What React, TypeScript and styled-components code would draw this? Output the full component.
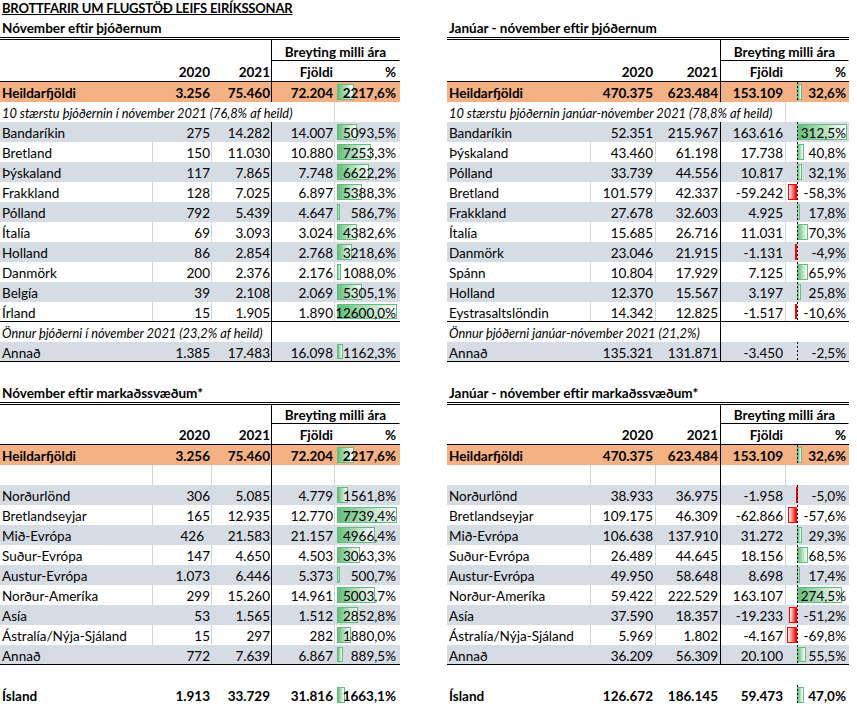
import React from 'react';
import styled, { createGlobalStyle } from 'styled-components';

type Line = 'none' | 'grid' | 'black';

interface RowData {
  label: string;
  a: string;
  b: string;
  diff: string;
  pct: string;
  bar: number;
  padA?: number;
}

interface SectionData {
  heading: string;
  headH: number;
  headLH: number;
  total: RowData;
  intro?: string;
  rows: RowData[];
  note?: string;
  other?: RowData;
  footer?: RowData;
}

interface TableSpec {
  cols: number[];
  pads: number[];
  barStart: number;
  axis: number | null;
}

const GRID = '#d4d4d4';
const GRAY = '#d6dce4';
const ORANGE = '#f4b183';

const GlobalStyle = createGlobalStyle`
  html, body { margin: 0; padding: 0; background: #ffffff; }
  body {
    font-family: Lato, "Noto Sans", sans-serif;
    font-size: 13.5px;
    color: #000000;
  }
`;

const Page = styled.div`
  display: flex;
  gap: 47px;
  width: 857px;
  height: 712px;
  overflow: hidden;
`;

const Column = styled.div<{ $w: number }>`
  display: flex;
  flex-direction: column;
  width: ${(p) => p.$w}px;
  flex: none;
`;

const Title = styled.div`
  height: 17px;
  line-height: 16px;
  padding-left: 2px;
  font-size: 13px;
  letter-spacing: -0.2px;
  font-weight: 700;
  text-decoration: underline;
  white-space: nowrap;
`;

const Gap = styled.div`
  height: 20px;
`;

const Heading = styled.div`
  height: 20px;
  line-height: 22px;
  padding-left: 2px;
  font-weight: 700;
  white-space: nowrap;
  border-bottom: 3px double #000000;
`;

const Row = styled.div<{
  $cols: string;
  $bg?: string;
  $h?: number;
  $lh?: number;
  $rule?: boolean;
  $bold?: boolean;
  $italic?: boolean;
}>`
  display: grid;
  grid-template-columns: ${(p) => p.$cols};
  grid-template-rows: minmax(0, 1fr);
  box-sizing: border-box;
  height: ${(p) => p.$h ?? 20}px;
  line-height: ${(p) => p.$lh ?? 22}px;
  background: ${(p) => p.$bg ?? 'transparent'};
  border-bottom: ${(p) => (p.$rule ? '1px solid #000000' : 'none')};
  font-weight: ${(p) => (p.$bold ? 700 : 400)};
  font-style: ${(p) => (p.$italic ? 'italic' : 'normal')};
  font-size: ${(p) => (p.$italic ? '12.8px' : 'inherit')};
  white-space: nowrap;
`;

const Cell = styled.div<{
  $line?: Line;
  $align?: 'left' | 'right' | 'center';
  $pr?: number;
  $span?: number;
  $under?: boolean;
}>`
  position: relative;
  box-sizing: border-box;
  min-width: 0;
  grid-column: span ${(p) => p.$span ?? 1};
  text-align: ${(p) => p.$align ?? 'right'};
  padding-right: ${(p) => (p.$align === 'right' || !p.$align ? p.$pr ?? 2 : 0)}px;
  padding-left: ${(p) => (p.$align === 'left' ? 2 : 0)}px;
  border-right: 1px solid
    ${(p) => (p.$line === 'black' ? '#000000' : p.$line === 'grid' ? GRID : 'transparent')};
  border-bottom: ${(p) => (p.$under ? '1px solid #000000' : 'none')};
`;

const Bar = styled.span<{ $neg: boolean }>`
  position: absolute;
  top: 2px;
  bottom: 2px;
  box-sizing: border-box;
  border: 1px solid ${(p) => (p.$neg ? '#ff0000' : '#63be7b')};
  background: linear-gradient(
    ${(p) => (p.$neg ? 'to left' : 'to right')},
    ${(p) => (p.$neg ? '#ff0000' : '#63be7b')},
    #ffffff
  );
`;

const Axis = styled.span<{ $x: number }>`
  position: absolute;
  top: 0;
  bottom: 0;
  left: ${(p) => p.$x}px;
  width: 1px;
  background: repeating-linear-gradient(to bottom, #000000 0 2px, transparent 2px 4px);
  z-index: 1;
`;

const PctText = styled.span`
  position: relative;
  z-index: 2;
`;

const LEFT: TableSpec = { cols: [153, 59, 60, 63, 65], pads: [1, 1, 1, 3], barStart: 2, axis: null };
const RIGHT: TableSpec = { cols: [144, 65, 65, 65, 63], pads: [2, 2, 2, 2], barStart: 12, axis: 11 };

const colsOf = (s: TableSpec) => s.cols.map((c) => `${c}px`).join(' ');

const r = (label: string, a: string, b: string, diff: string, pct: string, bar: number, padA?: number): RowData => ({
  label,
  a,
  b,
  diff,
  pct,
  bar,
  padA,
});

const topLeft: SectionData = {
  heading: 'Nóvember eftir þjóðernum',
  headH: 21,
  headLH: 24,
  total: r('Heildarfjöldi', '3.256', '75.460', '72.204', '2217,6%', 17),
  intro: '10 stærstu þjóðernin í nóvember 2021 (76,8% af heild)',
  rows: [
    r('Bandaríkin', '275', '14.282', '14.007', '5093,5%', 20),
    r('Bretland', '150', '11.030', '10.880', '7253,3%', 34),
    r('Þýskaland', '117', '7.865', '7.748', '6622,2%', 32),
    r('Frakkland', '128', '7.025', '6.897', '5388,3%', 25),
    r('Pólland', '792', '5.439', '4.647', '586,7%', 3),
    r('Ítalía', '69', '3.093', '3.024', '4382,6%', 20),
    r('Holland', '86', '2.854', '2.768', '3218,6%', 15),
    r('Danmörk', '200', '2.376', '2.176', '1088,0%', 4),
    r('Belgía', '39', '2.108', '2.069', '5305,1%', 25),
    r('Írland', '15', '1.905', '1.890', '12600,0%', 60),
  ],
  note: 'Önnur þjóðerni í nóvember 2021 (23,2% af heild)',
  other: r('Annað', '1.385', '17.483', '16.098', '1162,3%', 6),
};

const topRight: SectionData = {
  heading: 'Janúar - nóvember eftir þjóðernum',
  headH: 21,
  headLH: 24,
  total: r('Heildarfjöldi', '470.375', '623.484', '153.109', '32,6%', 5),
  intro: '10 stærstu þjóðernin janúar-nóvember 2021 (78,8% af heild)',
  rows: [
    r('Bandaríkin', '52.351', '215.967', '163.616', '312,5%', 50),
    r('Þýskaland', '43.460', '61.198', '17.738', '40,8%', 7),
    r('Pólland', '33.739', '44.556', '10.817', '32,1%', 5),
    r('Bretland', '101.579', '42.337', '-59.242', '-58,3%', -9),
    r('Frakkland', '27.678', '32.603', '4.925', '17,8%', 3),
    r('Ítalía', '15.685', '26.716', '11.031', '70,3%', 11),
    r('Danmörk', '23.046', '21.915', '-1.131', '-4,9%', -2),
    r('Spánn', '10.804', '17.929', '7.125', '65,9%', 11),
    r('Holland', '12.370', '15.567', '3.197', '25,8%', 4),
    r('Eystrasaltslöndin', '14.342', '12.825', '-1.517', '-10,6%', -2),
  ],
  note: 'Önnur þjóðerni janúar-nóvember 2021 (21,2%)',
  other: r('Annað', '135.321', '131.871', '-3.450', '-2,5%', 0),
};

const bottomLeft: SectionData = {
  heading: 'Nóvember eftir markaðssvæðum*',
  headH: 19,
  headLH: 21,
  total: r('Heildarfjöldi', '3.256', '75.460', '72.204', '2217,6%', 17),
  rows: [
    r('Norðurlönd', '306', '5.085', '4.779', '1561,8%', 11),
    r('Bretlandseyjar', '165', '12.935', '12.770', '7739,4%', 60),
    r('Mið-Evrópa', '426', '21.583', '21.157', '4966,4%', 38, 6),
    r('Suður-Evrópa', '147', '4.650', '4.503', '3063,3%', 23),
    r('Austur-Evrópa', '1.073', '6.446', '5.373', '500,7%', 3),
    r('Norður-Ameríka', '299', '15.260', '14.961', '5003,7%', 38),
    r('Asía', '53', '1.565', '1.512', '2852,8%', 21),
    r('Ástralía/Nýja-Sjáland', '15', '297', '282', '1880,0%', 14),
    r('Annað', '772', '7.639', '6.867', '889,5%', 6),
  ],
  footer: r('Ísland', '1.913', '33.729', '31.816', '1663,1%', 8),
};

const bottomRight: SectionData = {
  heading: 'Janúar - nóvember eftir markaðssvæðum*',
  headH: 19,
  headLH: 21,
  total: r('Heildarfjöldi', '470.375', '623.484', '153.109', '32,6%', 5),
  rows: [
    r('Norðurlönd', '38.933', '36.975', '-1.958', '-5,0%', -1),
    r('Bretlandseyjar', '109.175', '46.309', '-62.866', '-57,6%', -9),
    r('Mið-Evrópa', '106.638', '137.910', '31.272', '29,3%', 5),
    r('Suður-Evrópa', '26.489', '44.645', '18.156', '68,5%', 11),
    r('Austur-Evrópa', '49.950', '58.648', '8.698', '17,4%', 3),
    r('Norður-Ameríka', '59.422', '222.529', '163.107', '274,5%', 45),
    r('Asía', '37.590', '18.357', '-19.233', '-51,2%', -8),
    r('Ástralía/Nýja-Sjáland', '5.969', '1.802', '-4.167', '-69,8%', -10),
    r('Annað', '36.209', '56.309', '20.100', '55,5%', 9),
  ],
  footer: r('Ísland', '126.672', '186.145', '59.473', '47,0%', 7),
};

interface LineRowProps {
  spec: TableSpec;
  d: RowData;
  bg?: string;
  grid?: boolean;
  divider?: boolean;
  rule?: boolean;
  bold?: boolean;
}

function PctCell({ spec, d }: { spec: TableSpec; d: RowData }) {
  const neg = d.bar < 0;
  const w = Math.abs(d.bar);
  const left = spec.axis !== null ? (neg ? spec.axis - w : spec.axis) : spec.barStart;
  return (
    <Cell $pr={spec.pads[3]}>
      {w > 0 && <Bar $neg={neg} style={{ left, width: w }} />}
      {spec.axis !== null && <Axis $x={spec.axis} />}
      <PctText>{d.pct}</PctText>
    </Cell>
  );
}

function LineRow({ spec, d, bg, grid, divider, rule, bold }: LineRowProps) {
  const g: Line = grid ? 'grid' : 'none';
  return (
    <Row $cols={colsOf(spec)} $bg={bg} $rule={rule} $bold={bold}>
      <Cell $align="left" $line={g}>
        {d.label}
      </Cell>
      <Cell $line={g} $pr={spec.pads[0] + (d.padA ?? 0)}>
        {d.a}
      </Cell>
      <Cell $line={divider ? 'black' : g} $pr={spec.pads[1]}>
        {d.b}
      </Cell>
      <Cell $line={g} $pr={spec.pads[2]}>
        {d.diff}
      </Cell>
      <PctCell spec={spec} d={d} />
    </Row>
  );
}

function Section({ spec, s }: { spec: TableSpec; s: SectionData }) {
  const cols = colsOf(spec);
  const last = s.rows.length - 1;
  return (
    <>
      <Heading>{s.heading}</Heading>
      <Row $cols={cols} $h={s.headH} $lh={s.headLH} $bold>
        <Cell />
        <Cell />
        <Cell $line="black" />
        <Cell $span={2} $align="center" $under>
          Breyting milli ára
        </Cell>
      </Row>
      <Row $cols={cols} $h={21} $rule $bold>
        <Cell />
        <Cell $pr={spec.pads[0]}>2020</Cell>
        <Cell $line="black" $pr={spec.pads[1]}>
          2021
        </Cell>
        <Cell $pr={spec.pads[2]}>Fjöldi</Cell>
        <Cell $pr={spec.pads[3]}>%</Cell>
      </Row>
      <LineRow spec={spec} d={s.total} bg={ORANGE} divider bold />
      {s.intro ? (
        <Row $cols={cols} $italic>
          <Cell $span={4} $align="left" $line="grid">
            {s.intro}
          </Cell>
          <Cell />
        </Row>
      ) : (
        <Row $cols={cols}>
          <Cell $line="grid" />
          <Cell $line="grid" />
          <Cell $line="black" />
          <Cell $line="grid" />
          <Cell />
        </Row>
      )}
      {s.rows.map((d, i) => (
        <LineRow
          key={d.label}
          spec={spec}
          d={d}
          bg={i % 2 === 0 ? GRAY : undefined}
          grid={i % 2 === 1}
          divider
          rule={i === last}
        />
      ))}
      {s.note && s.other && (
        <>
          <Row $cols={cols} $italic>
            <Cell $span={3} $align="left" $line="black">
              {s.note}
            </Cell>
            <Cell />
            <Cell />
          </Row>
          <LineRow spec={spec} d={s.other} bg={GRAY} divider rule />
        </>
      )}
      {s.footer && (
        <>
          <Gap />
          <LineRow spec={spec} d={s.footer} bold />
        </>
      )}
    </>
  );
}

export default function App() {
  return (
    <>
      <GlobalStyle />
      <Page>
        <Column $w={400}>
          <Title>BROTTFARIR UM FLUGSTÖÐ LEIFS EIRÍKSSONAR</Title>
          <Section spec={LEFT} s={topLeft} />
          <Gap />
          <Section spec={LEFT} s={bottomLeft} />
        </Column>
        <Column $w={402}>
          <Title />
          <Section spec={RIGHT} s={topRight} />
          <Gap />
          <Section spec={RIGHT} s={bottomRight} />
        </Column>
      </Page>
    </>
  );
}
